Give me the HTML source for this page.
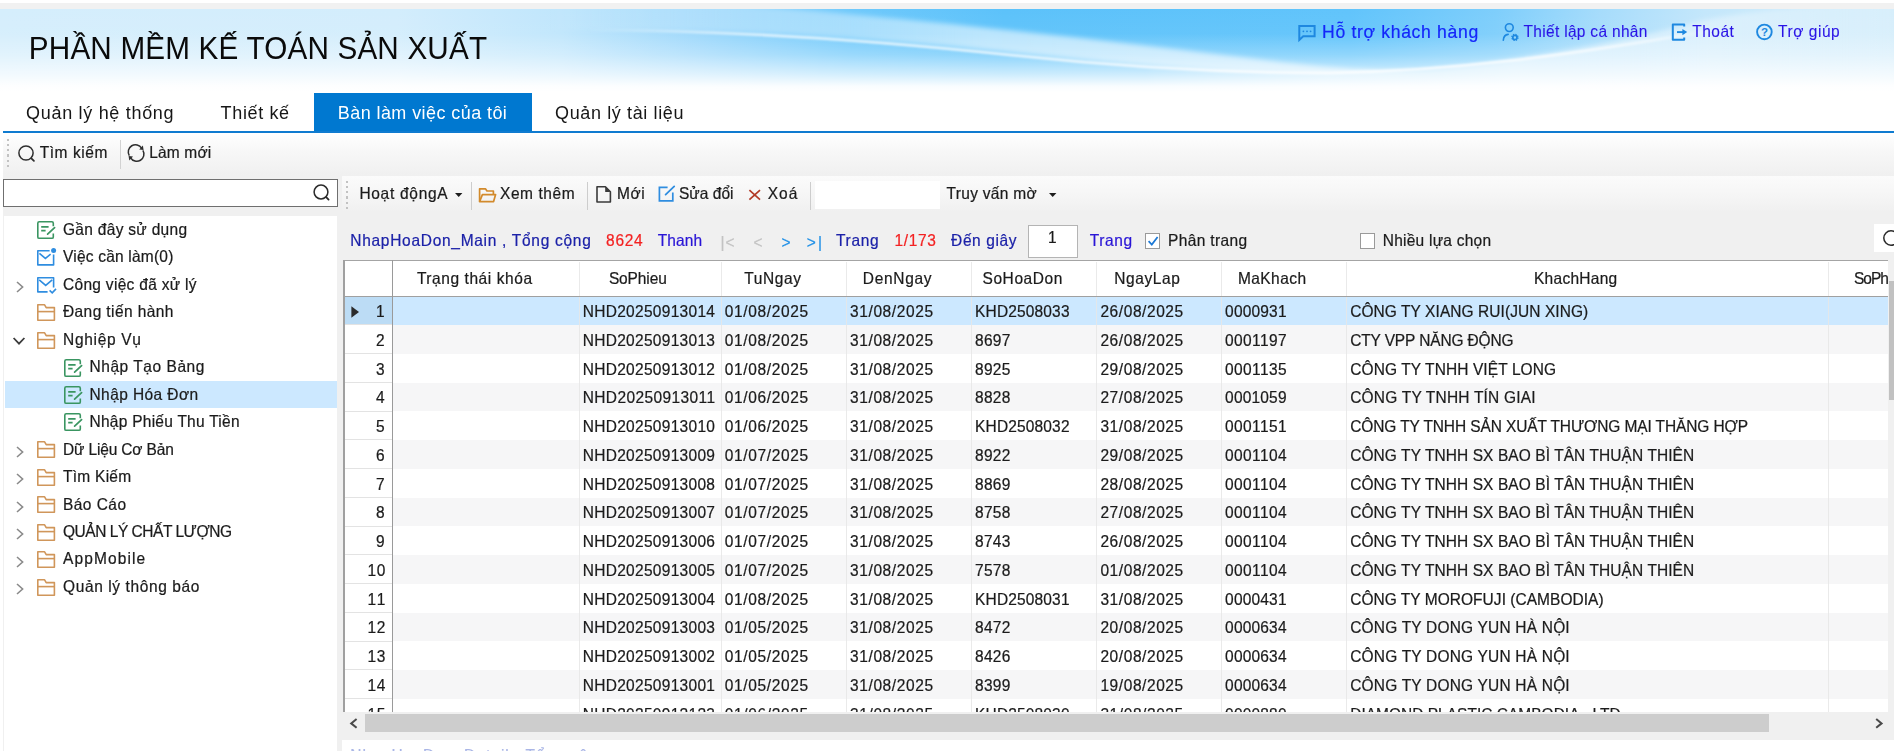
<!DOCTYPE html>
<html><head><meta charset="utf-8"><title>PHẦN MỀM KẾ TOÁN SẢN XUẤT</title>
<style>
html,body{margin:0;padding:0;}
body{width:1894px;height:751px;overflow:hidden;background:#fff;font-family:"Liberation Sans", sans-serif;position:relative;}
.b{position:absolute;box-sizing:border-box;}
.t{position:absolute;white-space:pre;line-height:1;-webkit-text-stroke:0.22px currentColor;transform:scaleY(1.05);transform-origin:0 84.65%;}
svg{overflow:visible;}
</style></head>
<body>
<div class="b" style="left:0.0px;top:0.0px;width:1894.0px;height:3.0px;background:#ffffff"></div>
<div class="b" style="left:0.0px;top:3.0px;width:1894.0px;height:5.5px;background:#f1f1f1"></div>
<svg class="b" style="left:0.0px;top:8.5px" width="1894" height="83" viewBox="0 0 1894 83">
<defs>
<linearGradient id="hg" gradientUnits="userSpaceOnUse" x1="0" x2="1894" y1="0" y2="0">
<stop offset="0" stop-color="#d5eefc"/><stop offset="0.21" stop-color="#d3edfc"/>
<stop offset="0.296" stop-color="#c0e6fc"/><stop offset="0.37" stop-color="#9bd7fb"/>
<stop offset="0.45" stop-color="#6fc9fb"/><stop offset="0.53" stop-color="#5cc2fa"/>
<stop offset="0.713" stop-color="#61c4fb"/><stop offset="0.79" stop-color="#7ecefb"/>
<stop offset="0.845" stop-color="#a6dcfb"/><stop offset="0.90" stop-color="#c4e7fb"/><stop offset="1" stop-color="#d3edfb"/>
</linearGradient>
<linearGradient id="vg" x1="0" x2="0" y1="0" y2="1">
<stop offset="0" stop-color="#fff" stop-opacity="0"/><stop offset="0.30" stop-color="#fff" stop-opacity="0.04"/>
<stop offset="0.55" stop-color="#fff" stop-opacity="0.30"/><stop offset="0.78" stop-color="#fff" stop-opacity="0.68"/>
<stop offset="0.93" stop-color="#fff" stop-opacity="0.96"/><stop offset="1" stop-color="#fff" stop-opacity="1"/>
</linearGradient>
<linearGradient id="rg" gradientUnits="userSpaceOnUse" x1="0" x2="1894" y1="0" y2="0">
<stop offset="0.29" stop-color="#fff" stop-opacity="0"/><stop offset="0.40" stop-color="#fff" stop-opacity="0.26"/>
<stop offset="0.52" stop-color="#fff" stop-opacity="0.56"/><stop offset="0.72" stop-color="#fff" stop-opacity="0.62"/>
</linearGradient>
<linearGradient id="og" gradientUnits="userSpaceOnUse" x1="0" x2="1894" y1="0" y2="0">
<stop offset="0.60" stop-color="#fff" stop-opacity="0"/><stop offset="0.70" stop-color="#fff" stop-opacity="0.45"/>
<stop offset="0.80" stop-color="#fff" stop-opacity="0.62"/><stop offset="0.90" stop-color="#fff" stop-opacity="0.38"/>
<stop offset="1" stop-color="#fff" stop-opacity="0.12"/>
</linearGradient>
<linearGradient id="sg" gradientUnits="userSpaceOnUse" x1="0" x2="1894" y1="0" y2="0">
<stop offset="0.31" stop-color="#fff" stop-opacity="0"/><stop offset="0.40" stop-color="#fff" stop-opacity="0.75"/>
<stop offset="0.80" stop-color="#fff" stop-opacity="0.9"/><stop offset="0.875" stop-color="#fff" stop-opacity="0.55"/>
<stop offset="0.915" stop-color="#fff" stop-opacity="0"/>
</linearGradient>
<filter id="bl2" x="-5%" y="-60%" width="110%" height="220%"><feGaussianBlur stdDeviation="2.4"/></filter>
<filter id="bl1" x="-5%" y="-60%" width="110%" height="220%"><feGaussianBlur stdDeviation="1.0"/></filter>
<clipPath id="bc"><rect x="0" y="0" width="1894" height="83"/></clipPath>
</defs>
<g clip-path="url(#bc)">
<rect x="0" y="0" width="1894" height="83" fill="url(#hg)"/>
<path d="M700,-6 C850,2 1080,28 1280,53 C1340,60 1400,64 1440,62 C1380,66 1320,66 1270,64 C1120,58 980,38 860,30 C770,23 700,21 620,21 L540,21 L540,-6 Z" fill="url(#rg)" filter="url(#bl2)"/>
<path d="M1150,58 C1260,66 1350,66 1430,60 C1530,50 1620,34 1700,12 C1760,0 1820,-4 1894,-6 L1894,90 L1150,90 Z" fill="url(#og)" filter="url(#bl2)"/>
<path d="M560,21 C700,20 860,30 1010,46 C1120,58 1230,64 1330,64 C1450,62 1560,48 1720,20" fill="none" stroke="url(#sg)" stroke-width="2.4" filter="url(#bl1)"/>
<rect x="0" y="0" width="1894" height="83" fill="url(#vg)"/>
</g>
</svg>
<span class="t" style="left:28.8px;top:33.5px;font-size:29.7px;color:#0a0a0a;letter-spacing:0.17px;-webkit-text-stroke:0;transform:scaleY(1.075);">PHẦN MỀM KẾ TOÁN SẢN XUẤT</span>
<span class="t" style="left:1322.1px;top:24.4px;font-size:17.6px;color:#1426fa;letter-spacing:0.66px;-webkit-text-stroke:0.2px;">Hỗ trợ khách hàng</span>
<span class="t" style="left:1523.5px;top:23.8px;font-size:15.5px;color:#2a14e6;letter-spacing:0.31px;-webkit-text-stroke:0.1px;">Thiết lập cá nhân</span>
<span class="t" style="left:1692.2px;top:23.8px;font-size:15.5px;color:#2a14e6;letter-spacing:0.52px;-webkit-text-stroke:0.1px;">Thoát</span>
<span class="t" style="left:1778.0px;top:23.8px;font-size:15.5px;color:#2a14e6;letter-spacing:0.55px;-webkit-text-stroke:0.1px;">Trợ giúp</span>
<svg class="b" style="left:1296.0px;top:22.0px" width="24" height="22" viewBox="0 0 24 22"><path d="M3.3,3.9 H18.6 V14.3 H7.2 L3.3,17.9 Z" fill="none" stroke="#1e88e0" stroke-width="2" stroke-linejoin="miter"/><circle cx="7.4" cy="9.3" r="0.9" fill="#1e88e0"/><circle cx="11" cy="9.3" r="0.9" fill="#1e88e0"/><circle cx="14.6" cy="9.3" r="0.9" fill="#1e88e0"/></svg>
<svg class="b" style="left:1500.0px;top:20.0px" width="24" height="24" viewBox="0 0 24 24"><circle cx="9.3" cy="7.6" r="3.9" fill="none" stroke="#1e88e0" stroke-width="1.6"/><path d="M3.3,20.2 C3.6,16.6 5.6,14.6 8.2,14.4" fill="none" stroke="#1e88e0" stroke-width="1.6" stroke-linecap="round"/><circle cx="14.9" cy="17.4" r="2.1" fill="none" stroke="#1e88e0" stroke-width="1.7"/><circle cx="14.9" cy="17.4" r="3.1" fill="none" stroke="#1e88e0" stroke-width="1.2" stroke-dasharray="1.3 1.15"/></svg>
<svg class="b" style="left:1668.0px;top:20.0px" width="24" height="24" viewBox="0 0 24 24"><path d="M16.2,6.6 V4.5 H4.8 V19.7 H16.2 V17.4" fill="none" stroke="#1e88e0" stroke-width="2" stroke-linejoin="round"/><path d="M9,12.1 H15" stroke="#1e88e0" stroke-width="1.9"/><path d="M14.4,8.9 L19.2,12.1 L14.4,15.3 Z" fill="#1e88e0"/></svg>
<svg class="b" style="left:1752.0px;top:20.0px" width="24" height="24" viewBox="0 0 24 24"><circle cx="12.4" cy="11.9" r="7.3" fill="none" stroke="#1e88e0" stroke-width="1.9"/><text x="12.4" y="16" text-anchor="middle" font-family="Liberation Sans" font-weight="bold" font-size="11.5" fill="#1e88e0">?</text></svg>
<div class="b" style="left:314.4px;top:93.4px;width:217.5px;height:39.0px;background:#0078d0"></div>
<div class="b" style="left:3.0px;top:130.6px;width:1891.0px;height:2.6px;background:#0f7bd0"></div>
<span class="t" style="left:26.1px;top:104.2px;font-size:18px;color:#161616;letter-spacing:0.69px;-webkit-text-stroke:0;">Quản lý hệ thống</span>
<span class="t" style="left:220.6px;top:104.2px;font-size:18px;color:#161616;letter-spacing:0.64px;-webkit-text-stroke:0;">Thiết kế</span>
<span class="t" style="left:337.8px;top:104.2px;font-size:18px;color:#ffffff;letter-spacing:0.42px;-webkit-text-stroke:0;">Bàn làm việc của tôi</span>
<span class="t" style="left:555.1px;top:104.2px;font-size:18px;color:#161616;letter-spacing:0.62px;-webkit-text-stroke:0;">Quản lý tài liệu</span>
<div class="b" style="left:3.0px;top:133.2px;width:1891.0px;height:42.0px;background:linear-gradient(#ffffff 0%,#f7f7f7 45%,#f0f0f0 100%)"></div>
<div class="b" style="left:3.0px;top:175.0px;width:1891.0px;height:576.0px;background:#f0f0f0"></div>
<div class="b" style="left:0.0px;top:91.5px;width:3.0px;height:660.0px;background:#ffffff"></div>
<div class="b" style="left:7.2px;top:139.0px;width:2.2px;height:2.2px;background:#c2c2c2"></div>
<div class="b" style="left:7.2px;top:144.2px;width:2.2px;height:2.2px;background:#c2c2c2"></div>
<div class="b" style="left:7.2px;top:149.3px;width:2.2px;height:2.2px;background:#c2c2c2"></div>
<div class="b" style="left:7.2px;top:154.4px;width:2.2px;height:2.2px;background:#c2c2c2"></div>
<div class="b" style="left:7.2px;top:159.6px;width:2.2px;height:2.2px;background:#c2c2c2"></div>
<div class="b" style="left:7.2px;top:164.8px;width:2.2px;height:2.2px;background:#c2c2c2"></div>
<svg class="b" style="left:14.0px;top:140.6px" width="24" height="24" viewBox="0 0 24 24"><circle cx="12" cy="12" r="7.1" fill="none" stroke="#2e2e2e" stroke-width="1.5"/><path d="M17.32,17.32 l2.6,2.6" stroke="#2e2e2e" stroke-width="1.8" stroke-linecap="round"/></svg>
<span class="t" style="left:39.7px;top:145.2px;font-size:15.5px;color:#1b1b1b;letter-spacing:0.56px;">Tìm kiếm</span>
<div class="b" style="left:119.8px;top:140.0px;width:1.0px;height:28.5px;background:#d2d2d2"></div>
<svg class="b" style="left:123.7px;top:141.0px" width="24" height="24" viewBox="0 0 24 24"><path d="M5.3,14.6 A7.1,7.1 0 0 1 17.6,7.2" fill="none" stroke="#2e2e2e" stroke-width="1.5"/><path d="M18.9,9.4 A7.1,7.1 0 0 1 6.6,16.8" fill="none" stroke="#2e2e2e" stroke-width="1.5"/><path d="M15.2,8.6 L19.6,8.9 L18.9,4.6 Z" fill="#2e2e2e"/><path d="M9,15.4 L4.6,15.1 L5.3,19.4 Z" fill="#2e2e2e"/></svg>
<span class="t" style="left:149.3px;top:145.2px;font-size:15.5px;color:#1b1b1b;letter-spacing:0.15px;">Làm mới</span>
<div class="b" style="left:3.2px;top:178.8px;width:334.6px;height:28.3px;background:#fff;border:1.3px solid #6f6f6f"></div>
<svg class="b" style="left:308.6px;top:180.3px" width="24" height="24" viewBox="0 0 24 24"><circle cx="12" cy="12" r="6.9" fill="none" stroke="#2a2a2a" stroke-width="1.5"/><path d="M17.18,17.18 l2.4,2.4" stroke="#2a2a2a" stroke-width="1.8" stroke-linecap="round"/></svg>
<div class="b" style="left:3.6px;top:215.8px;width:333.0px;height:536.0px;background:#ffffff"></div>
<div class="b" style="left:4.7px;top:381.2px;width:331.9px;height:26.4px;background:#cce8ff"></div>
<svg class="b" style="left:36.2px;top:220.2px" width="22" height="22" viewBox="0 0 22 22"><path d="M17.3,6.2 V3.2 Q17.3,1.8 15.9,1.8 H3.2 Q1.8,1.8 1.8,3.2 V16.9 Q1.8,18.3 3.2,18.3 H15.9 Q17.3,18.3 17.3,16.9 V13.6" fill="none" stroke="#3a9561" stroke-width="1.6"/><path d="M5.2,6.9 H12.6 M5.2,10.6 H9.6" stroke="#3a9561" stroke-width="1.6"/><path d="M11.6,14.2 L18.6,7.6" stroke="#3a9561" stroke-width="1.7" stroke-linecap="round"/></svg>
<span class="t" style="left:63.0px;top:222.0px;font-size:15.5px;color:#1b1b1b;letter-spacing:0.30px;">Gần đây sử dụng</span>
<svg class="b" style="left:36.2px;top:247.2px" width="24" height="22" viewBox="0 0 24 22"><path d="M13.6,3.8 H1.8 V17.9 H17.6 V7.6" fill="none" stroke="#2f8de0" stroke-width="1.6" stroke-linejoin="round"/><path d="M3.4,6.4 L9.4,11.4 L14.6,7.2" fill="none" stroke="#2f8de0" stroke-width="1.6"/><circle cx="17.6" cy="3.6" r="2.5" fill="#2f8de0"/></svg>
<span class="t" style="left:63.0px;top:249.4px;font-size:15.5px;color:#1b1b1b;letter-spacing:0.21px;">Việc cần làm(0)</span>
<svg class="b" style="left:36.2px;top:276.4px" width="24" height="22" viewBox="0 0 24 22"><path d="M11.6,15.9 H1.8 V1.8 H17.6 V11.4" fill="none" stroke="#2f8de0" stroke-width="1.6" stroke-linejoin="round"/><path d="M3.2,3.8 L9.7,9.4 L16.2,3.8" fill="none" stroke="#2f8de0" stroke-width="1.6"/><path d="M13.6,14.4 L16.2,16.8 L20,12.9" fill="none" stroke="#2f8de0" stroke-width="1.6"/></svg>
<svg class="b" style="left:13.6px;top:280.0px" width="12" height="14" viewBox="0 0 12 14"><path d="M3,2 L8.6,7 L3,12" fill="none" stroke="#8a8a8a" stroke-width="1.6"/></svg>
<span class="t" style="left:63.0px;top:276.9px;font-size:15.5px;color:#1b1b1b;letter-spacing:0.30px;">Công việc đã xử lý</span>
<svg class="b" style="left:36.2px;top:303.1px" width="22" height="20" viewBox="0 0 22 20"><path d="M1.8,17.3 V1.8 H8.6 L10.2,4.6 H18.4 V17.3 Z" fill="none" stroke="#d0965a" stroke-width="1.6" stroke-linejoin="round"/><path d="M1.8,8.6 H18.4" stroke="#d0965a" stroke-width="1.6"/></svg>
<span class="t" style="left:63.0px;top:304.3px;font-size:15.5px;color:#1b1b1b;letter-spacing:0.40px;">Đang tiến hành</span>
<svg class="b" style="left:36.2px;top:330.5px" width="22" height="20" viewBox="0 0 22 20"><path d="M1.8,17.3 V1.8 H8.6 L10.2,4.6 H18.4 V17.3 Z" fill="none" stroke="#d0965a" stroke-width="1.6" stroke-linejoin="round"/><path d="M1.8,8.6 H18.4" stroke="#d0965a" stroke-width="1.6"/></svg>
<svg class="b" style="left:12.0px;top:334.9px" width="14" height="12" viewBox="0 0 14 12"><path d="M1.6,3 L7,8.6 L12.4,3" fill="none" stroke="#3c3c3c" stroke-width="1.8"/></svg>
<span class="t" style="left:63.0px;top:331.8px;font-size:15.5px;color:#1b1b1b;letter-spacing:0.70px;">Nghiệp Vụ</span>
<svg class="b" style="left:62.6px;top:357.5px" width="22" height="22" viewBox="0 0 22 22"><path d="M17.3,6.2 V3.2 Q17.3,1.8 15.9,1.8 H3.2 Q1.8,1.8 1.8,3.2 V16.9 Q1.8,18.3 3.2,18.3 H15.9 Q17.3,18.3 17.3,16.9 V13.6" fill="none" stroke="#3a9561" stroke-width="1.6"/><path d="M5.2,6.9 H12.6 M5.2,10.6 H9.6" stroke="#3a9561" stroke-width="1.6"/><path d="M11.6,14.2 L18.6,7.6" stroke="#3a9561" stroke-width="1.7" stroke-linecap="round"/></svg>
<span class="t" style="left:89.5px;top:359.2px;font-size:15.5px;color:#1b1b1b;letter-spacing:0.55px;">Nhập Tạo Bảng</span>
<svg class="b" style="left:62.6px;top:384.9px" width="22" height="22" viewBox="0 0 22 22"><path d="M17.3,6.2 V3.2 Q17.3,1.8 15.9,1.8 H3.2 Q1.8,1.8 1.8,3.2 V16.9 Q1.8,18.3 3.2,18.3 H15.9 Q17.3,18.3 17.3,16.9 V13.6" fill="none" stroke="#3a9561" stroke-width="1.6"/><path d="M5.2,6.9 H12.6 M5.2,10.6 H9.6" stroke="#3a9561" stroke-width="1.6"/><path d="M11.6,14.2 L18.6,7.6" stroke="#3a9561" stroke-width="1.7" stroke-linecap="round"/></svg>
<span class="t" style="left:89.5px;top:386.7px;font-size:15.5px;color:#1b1b1b;letter-spacing:0.41px;">Nhập Hóa Đơn</span>
<svg class="b" style="left:62.6px;top:412.4px" width="22" height="22" viewBox="0 0 22 22"><path d="M17.3,6.2 V3.2 Q17.3,1.8 15.9,1.8 H3.2 Q1.8,1.8 1.8,3.2 V16.9 Q1.8,18.3 3.2,18.3 H15.9 Q17.3,18.3 17.3,16.9 V13.6" fill="none" stroke="#3a9561" stroke-width="1.6"/><path d="M5.2,6.9 H12.6 M5.2,10.6 H9.6" stroke="#3a9561" stroke-width="1.6"/><path d="M11.6,14.2 L18.6,7.6" stroke="#3a9561" stroke-width="1.7" stroke-linecap="round"/></svg>
<span class="t" style="left:89.5px;top:414.1px;font-size:15.5px;color:#1b1b1b;letter-spacing:0.26px;">Nhập Phiếu Thu Tiền</span>
<svg class="b" style="left:36.2px;top:440.3px" width="22" height="20" viewBox="0 0 22 20"><path d="M1.8,17.3 V1.8 H8.6 L10.2,4.6 H18.4 V17.3 Z" fill="none" stroke="#d0965a" stroke-width="1.6" stroke-linejoin="round"/><path d="M1.8,8.6 H18.4" stroke="#d0965a" stroke-width="1.6"/></svg>
<svg class="b" style="left:13.6px;top:444.7px" width="12" height="14" viewBox="0 0 12 14"><path d="M3,2 L8.6,7 L3,12" fill="none" stroke="#8a8a8a" stroke-width="1.6"/></svg>
<span class="t" style="left:63.0px;top:441.6px;font-size:15.5px;color:#1b1b1b;letter-spacing:-0.15px;">Dữ Liệu Cơ Bản</span>
<svg class="b" style="left:36.2px;top:467.8px" width="22" height="20" viewBox="0 0 22 20"><path d="M1.8,17.3 V1.8 H8.6 L10.2,4.6 H18.4 V17.3 Z" fill="none" stroke="#d0965a" stroke-width="1.6" stroke-linejoin="round"/><path d="M1.8,8.6 H18.4" stroke="#d0965a" stroke-width="1.6"/></svg>
<svg class="b" style="left:13.6px;top:472.1px" width="12" height="14" viewBox="0 0 12 14"><path d="M3,2 L8.6,7 L3,12" fill="none" stroke="#8a8a8a" stroke-width="1.6"/></svg>
<span class="t" style="left:63.0px;top:469.0px;font-size:15.5px;color:#1b1b1b;letter-spacing:0.26px;">Tìm Kiếm</span>
<svg class="b" style="left:36.2px;top:495.2px" width="22" height="20" viewBox="0 0 22 20"><path d="M1.8,17.3 V1.8 H8.6 L10.2,4.6 H18.4 V17.3 Z" fill="none" stroke="#d0965a" stroke-width="1.6" stroke-linejoin="round"/><path d="M1.8,8.6 H18.4" stroke="#d0965a" stroke-width="1.6"/></svg>
<svg class="b" style="left:13.6px;top:499.6px" width="12" height="14" viewBox="0 0 12 14"><path d="M3,2 L8.6,7 L3,12" fill="none" stroke="#8a8a8a" stroke-width="1.6"/></svg>
<span class="t" style="left:63.0px;top:496.5px;font-size:15.5px;color:#1b1b1b;letter-spacing:0.45px;">Báo Cáo</span>
<svg class="b" style="left:36.2px;top:522.6px" width="22" height="20" viewBox="0 0 22 20"><path d="M1.8,17.3 V1.8 H8.6 L10.2,4.6 H18.4 V17.3 Z" fill="none" stroke="#d0965a" stroke-width="1.6" stroke-linejoin="round"/><path d="M1.8,8.6 H18.4" stroke="#d0965a" stroke-width="1.6"/></svg>
<svg class="b" style="left:13.6px;top:527.0px" width="12" height="14" viewBox="0 0 12 14"><path d="M3,2 L8.6,7 L3,12" fill="none" stroke="#8a8a8a" stroke-width="1.6"/></svg>
<span class="t" style="left:63.0px;top:523.9px;font-size:15.5px;color:#1b1b1b;letter-spacing:-0.47px;">QUẢN LÝ CHẤT LƯỢNG</span>
<svg class="b" style="left:36.2px;top:550.1px" width="22" height="20" viewBox="0 0 22 20"><path d="M1.8,17.3 V1.8 H8.6 L10.2,4.6 H18.4 V17.3 Z" fill="none" stroke="#d0965a" stroke-width="1.6" stroke-linejoin="round"/><path d="M1.8,8.6 H18.4" stroke="#d0965a" stroke-width="1.6"/></svg>
<svg class="b" style="left:13.6px;top:554.5px" width="12" height="14" viewBox="0 0 12 14"><path d="M3,2 L8.6,7 L3,12" fill="none" stroke="#8a8a8a" stroke-width="1.6"/></svg>
<span class="t" style="left:63.0px;top:551.4px;font-size:15.5px;color:#1b1b1b;letter-spacing:1.12px;">AppMobile</span>
<svg class="b" style="left:36.2px;top:577.5px" width="22" height="20" viewBox="0 0 22 20"><path d="M1.8,17.3 V1.8 H8.6 L10.2,4.6 H18.4 V17.3 Z" fill="none" stroke="#d0965a" stroke-width="1.6" stroke-linejoin="round"/><path d="M1.8,8.6 H18.4" stroke="#d0965a" stroke-width="1.6"/></svg>
<svg class="b" style="left:13.6px;top:581.9px" width="12" height="14" viewBox="0 0 12 14"><path d="M3,2 L8.6,7 L3,12" fill="none" stroke="#8a8a8a" stroke-width="1.6"/></svg>
<span class="t" style="left:63.0px;top:578.8px;font-size:15.5px;color:#1b1b1b;letter-spacing:0.61px;">Quản lý thông báo</span>
<div class="b" style="left:342.3px;top:175.7px;width:1552.0px;height:36.2px;background:linear-gradient(#fbfbfb 0%,#f6f6f6 50%,#f0f0f0 100%)"></div>
<div class="b" style="left:345.8px;top:181.0px;width:2.2px;height:2.2px;background:#c2c2c2"></div>
<div class="b" style="left:345.8px;top:186.2px;width:2.2px;height:2.2px;background:#c2c2c2"></div>
<div class="b" style="left:345.8px;top:191.3px;width:2.2px;height:2.2px;background:#c2c2c2"></div>
<div class="b" style="left:345.8px;top:196.4px;width:2.2px;height:2.2px;background:#c2c2c2"></div>
<div class="b" style="left:345.8px;top:201.6px;width:2.2px;height:2.2px;background:#c2c2c2"></div>
<div class="b" style="left:345.8px;top:206.8px;width:2.2px;height:2.2px;background:#c2c2c2"></div>
<span class="t" style="left:359.4px;top:186.3px;font-size:15.5px;color:#1b1b1b;letter-spacing:0.71px;">Hoạt độngA</span>
<svg class="b" style="left:455.2px;top:193.4px" width="8" height="5" viewBox="0 0 8 5"><path d="M0,0 H7.4 L3.7,4 Z" fill="#1e1e1e"/></svg>
<div class="b" style="left:470.8px;top:181.5px;width:1.0px;height:28.0px;background:#cdcdcd"></div>
<svg class="b" style="left:476.6px;top:185.6px" width="22" height="20" viewBox="0 0 22 20"><path d="M2.6,15.6 V2.8 H8.4 L10,5 H16.4 V8" fill="none" stroke="#d28a2c" stroke-width="1.7" stroke-linejoin="round"/><path d="M5.4,8.6 H18.6 L16.6,15.6 H2.6 Z" fill="none" stroke="#d28a2c" stroke-width="1.7" stroke-linejoin="round"/></svg>
<span class="t" style="left:500.0px;top:186.3px;font-size:15.5px;color:#1b1b1b;letter-spacing:0.57px;">Xem thêm</span>
<div class="b" style="left:586.8px;top:181.5px;width:1.0px;height:28.0px;background:#cdcdcd"></div>
<svg class="b" style="left:593.6px;top:184.4px" width="20" height="22" viewBox="0 0 20 22"><path d="M3,2.8 H11.4 L16.4,7.8 V18 H3 Z" fill="none" stroke="#3a3a3a" stroke-width="1.6" stroke-linejoin="round"/><path d="M11.2,2.8 V8 H16.4 Z" fill="#3a3a3a"/></svg>
<span class="t" style="left:617.1px;top:186.3px;font-size:15.5px;color:#1b1b1b;letter-spacing:0.59px;">Mới</span>
<svg class="b" style="left:656.6px;top:184.4px" width="22" height="22" viewBox="0 0 22 22"><path d="M10.6,3.4 H2.4 V16.8 H15.8 V8.6" fill="none" stroke="#2f8de0" stroke-width="1.7" stroke-linejoin="miter"/><path d="M8.6,10.6 L17.2,2.4" stroke="#2f8de0" stroke-width="1.8" stroke-linecap="round"/></svg>
<span class="t" style="left:678.9px;top:186.3px;font-size:15.5px;color:#1b1b1b;letter-spacing:0.05px;">Sửa đổi</span>
<svg class="b" style="left:747.0px;top:188.0px" width="16" height="14" viewBox="0 0 16 14"><path d="M2.4,2.2 L13,11.6 M13,2.2 L2.4,11.6" stroke="#b23a26" stroke-width="1.7"/></svg>
<span class="t" style="left:767.7px;top:186.3px;font-size:15.5px;color:#1b1b1b;letter-spacing:1.01px;">Xoá</span>
<div class="b" style="left:809.8px;top:181.5px;width:1.0px;height:28.0px;background:#cdcdcd"></div>
<div class="b" style="left:814.7px;top:180.6px;width:125.0px;height:28.4px;background:#ffffff"></div>
<span class="t" style="left:946.6px;top:186.3px;font-size:15.5px;color:#1b1b1b;letter-spacing:0.29px;">Truy vấn mờ</span>
<svg class="b" style="left:1049.4px;top:193.4px" width="8" height="5" viewBox="0 0 8 5"><path d="M0,0 H7.4 L3.7,4 Z" fill="#1e1e1e"/></svg>
<span class="t" style="left:350.3px;top:232.6px;font-size:15.5px;color:#1c22a8;letter-spacing:0.71px;">NhapHoaDon_Main , Tổng cộng</span>
<span class="t" style="left:606.1px;top:232.6px;font-size:15.5px;color:#f32222;letter-spacing:0.67px;">8624</span>
<span class="t" style="left:657.8px;top:232.6px;font-size:15.5px;color:#2a16d6;letter-spacing:0.11px;">Thanh</span>
<span class="t" style="left:720.5px;top:234.6px;font-size:15.5px;color:#c3c3c3;letter-spacing:1.03px;">|&lt;</span>
<span class="t" style="left:753.6px;top:234.6px;font-size:15.5px;color:#c3c3c3;">&lt;</span>
<span class="t" style="left:781.5px;top:234.6px;font-size:15.5px;color:#1f8fe6;">&gt;</span>
<span class="t" style="left:806.8px;top:234.6px;font-size:15.5px;color:#1f8fe6;letter-spacing:2.13px;">&gt;|</span>
<span class="t" style="left:836.0px;top:232.6px;font-size:15.5px;color:#1c22a8;letter-spacing:0.67px;">Trang</span>
<span class="t" style="left:894.5px;top:232.6px;font-size:15.5px;color:#f32222;letter-spacing:0.65px;">1/173</span>
<span class="t" style="left:951.1px;top:232.6px;font-size:15.5px;color:#1c22a8;letter-spacing:0.60px;">Đến giây</span>
<div class="b" style="left:1028.4px;top:225.3px;width:49.6px;height:32.3px;background:#fff;border:1.2px solid #b4b4b4"></div>
<span class="t" style="left:1048.1px;top:229.9px;font-size:15.5px;color:#1b1b1b;">1</span>
<span class="t" style="left:1089.7px;top:232.6px;font-size:15.5px;color:#2a16d6;letter-spacing:0.60px;">Trang</span>
<div class="b" style="left:1144.7px;top:232.8px;width:15.8px;height:15.8px;background:#fff;border:1.2px solid #9a9a9a"></div>
<svg class="b" style="left:1144.7px;top:232.8px" width="16" height="16" viewBox="0 0 16 16"><path d="M3.6,8.2 L6.8,11.6 L12.6,4" fill="none" stroke="#1b78d6" stroke-width="1.7"/></svg>
<span class="t" style="left:1168.1px;top:232.6px;font-size:15.5px;color:#1b1b1b;letter-spacing:0.35px;">Phân trang</span>
<div class="b" style="left:1359.7px;top:232.8px;width:15.8px;height:15.8px;background:#fff;border:1.2px solid #9a9a9a"></div>
<span class="t" style="left:1382.7px;top:232.6px;font-size:15.5px;color:#1b1b1b;letter-spacing:0.25px;">Nhiều lựa chọn</span>
<div class="b" style="left:1874.4px;top:223.6px;width:20.0px;height:28.2px;background:#ffffff"></div>
<svg class="b" style="left:1879.2px;top:226.4px" width="24" height="24" viewBox="0 0 24 24"><circle cx="12" cy="12" r="7.2" fill="none" stroke="#2a2a2a" stroke-width="1.5"/><path d="M17.39,17.39 l2.6,2.6" stroke="#2a2a2a" stroke-width="1.8" stroke-linecap="round"/></svg>
<div class="b" style="left:343.2px;top:260.0px;width:1545.1px;height:452.2px;background:#ffffff"></div>
<div class="b" style="left:393.3px;top:296.9px;width:1495.0px;height:27.9px;background:#cce8ff"></div>
<div class="b" style="left:344.8px;top:296.9px;width:47.2px;height:27.9px;background:#bcdcf5"></div>
<div class="b" style="left:344.8px;top:324.4px;width:47.4px;height:1.0px;background:#e3e3e3"></div>
<div class="b" style="left:393.3px;top:325.1px;width:1495.0px;height:28.8px;background:#f6f6f7"></div>
<div class="b" style="left:344.8px;top:353.2px;width:47.4px;height:1.0px;background:#e3e3e3"></div>
<div class="b" style="left:344.8px;top:381.9px;width:47.4px;height:1.0px;background:#e3e3e3"></div>
<div class="b" style="left:393.3px;top:382.6px;width:1495.0px;height:28.8px;background:#f6f6f7"></div>
<div class="b" style="left:344.8px;top:410.7px;width:47.4px;height:1.0px;background:#e3e3e3"></div>
<div class="b" style="left:344.8px;top:439.4px;width:47.4px;height:1.0px;background:#e3e3e3"></div>
<div class="b" style="left:393.3px;top:440.1px;width:1495.0px;height:28.8px;background:#f6f6f7"></div>
<div class="b" style="left:344.8px;top:468.2px;width:47.4px;height:1.0px;background:#e3e3e3"></div>
<div class="b" style="left:344.8px;top:496.9px;width:47.4px;height:1.0px;background:#e3e3e3"></div>
<div class="b" style="left:393.3px;top:497.6px;width:1495.0px;height:28.8px;background:#f6f6f7"></div>
<div class="b" style="left:344.8px;top:525.7px;width:47.4px;height:1.0px;background:#e3e3e3"></div>
<div class="b" style="left:344.8px;top:554.4px;width:47.4px;height:1.0px;background:#e3e3e3"></div>
<div class="b" style="left:393.3px;top:555.0px;width:1495.0px;height:28.8px;background:#f6f6f7"></div>
<div class="b" style="left:344.8px;top:583.2px;width:47.4px;height:1.0px;background:#e3e3e3"></div>
<div class="b" style="left:344.8px;top:611.9px;width:47.4px;height:1.0px;background:#e3e3e3"></div>
<div class="b" style="left:393.3px;top:612.5px;width:1495.0px;height:28.8px;background:#f6f6f7"></div>
<div class="b" style="left:344.8px;top:640.7px;width:47.4px;height:1.0px;background:#e3e3e3"></div>
<div class="b" style="left:344.8px;top:669.4px;width:47.4px;height:1.0px;background:#e3e3e3"></div>
<div class="b" style="left:393.3px;top:670.0px;width:1495.0px;height:28.8px;background:#f6f6f7"></div>
<div class="b" style="left:344.8px;top:698.2px;width:47.4px;height:1.0px;background:#e3e3e3"></div>
<div class="b" style="left:344.8px;top:726.9px;width:47.4px;height:1.0px;background:#e3e3e3"></div>
<div class="b" style="left:578.5px;top:262.0px;width:1.2px;height:450.2px;background:#e6e6e6;opacity:0.85"></div>
<div class="b" style="left:720.9px;top:262.0px;width:1.2px;height:450.2px;background:#e6e6e6;opacity:0.85"></div>
<div class="b" style="left:845.9px;top:262.0px;width:1.2px;height:450.2px;background:#e6e6e6;opacity:0.85"></div>
<div class="b" style="left:970.9px;top:262.0px;width:1.2px;height:450.2px;background:#e6e6e6;opacity:0.85"></div>
<div class="b" style="left:1095.9px;top:262.0px;width:1.2px;height:450.2px;background:#e6e6e6;opacity:0.85"></div>
<div class="b" style="left:1220.9px;top:262.0px;width:1.2px;height:450.2px;background:#e6e6e6;opacity:0.85"></div>
<div class="b" style="left:1345.9px;top:262.0px;width:1.2px;height:450.2px;background:#e6e6e6;opacity:0.85"></div>
<div class="b" style="left:1828.2px;top:262.0px;width:1.2px;height:450.2px;background:#e6e6e6;opacity:0.85"></div>
<div class="b" style="left:343.2px;top:295.6px;width:1545.1px;height:1.4px;background:#a0a0a0"></div>
<div class="b" style="left:343.2px;top:260.0px;width:1545.1px;height:1.3px;background:#a4a4a4"></div>
<div class="b" style="left:343.2px;top:260.0px;width:1.7px;height:452.2px;background:#a0a0a0"></div>
<div class="b" style="left:391.9px;top:260.0px;width:1.4px;height:452.2px;background:#9a9a9a"></div>
<span class="t" style="left:416.9px;top:270.9px;font-size:15.5px;color:#1b1b1b;letter-spacing:0.57px;">Trạng thái khóa</span>
<span class="t" style="left:608.9px;top:270.9px;font-size:15.5px;color:#1b1b1b;letter-spacing:-0.12px;">SoPhieu</span>
<span class="t" style="left:744.3px;top:270.9px;font-size:15.5px;color:#1b1b1b;letter-spacing:0.60px;">TuNgay</span>
<span class="t" style="left:862.8px;top:270.9px;font-size:15.5px;color:#1b1b1b;letter-spacing:0.70px;">DenNgay</span>
<span class="t" style="left:982.5px;top:270.9px;font-size:15.5px;color:#1b1b1b;letter-spacing:0.58px;">SoHoaDon</span>
<span class="t" style="left:1114.3px;top:270.9px;font-size:15.5px;color:#1b1b1b;letter-spacing:0.59px;">NgayLap</span>
<span class="t" style="left:1237.9px;top:270.9px;font-size:15.5px;color:#1b1b1b;letter-spacing:0.45px;">MaKhach</span>
<span class="t" style="left:1534.0px;top:270.9px;font-size:15.5px;color:#1b1b1b;letter-spacing:0.27px;">KhachHang</span>
<div class="b" style="left:1829px;top:262px;width:59.3px;height:30px;overflow:hidden"><span class="t" style="left:24.9px;top:8.9px;font-size:15.5px;color:#1b1b1b;letter-spacing:-0.95px">SoPhieu</span></div>
<div class="b" style="left:0;top:0;width:1888.3px;height:712.2px;overflow:hidden">
<span class="t" style="left:375.9px;top:304.1px;font-size:15.5px;color:#1b1b1b;">1</span>
<span class="t" style="left:582.7px;top:304.1px;font-size:15.5px;color:#1b1b1b;letter-spacing:0.30px;">NHD20250913014</span>
<span class="t" style="left:724.7px;top:304.1px;font-size:15.5px;color:#1b1b1b;letter-spacing:0.66px;">01/08/2025</span>
<span class="t" style="left:850.0px;top:304.1px;font-size:15.5px;color:#1b1b1b;letter-spacing:0.61px;">31/08/2025</span>
<span class="t" style="left:975.1px;top:304.1px;font-size:15.5px;color:#1b1b1b;letter-spacing:0.15px;">KHD2508033</span>
<span class="t" style="left:1100.4px;top:304.1px;font-size:15.5px;color:#1b1b1b;letter-spacing:0.58px;">26/08/2025</span>
<span class="t" style="left:1225.1px;top:304.1px;font-size:15.5px;color:#1b1b1b;letter-spacing:0.18px;">0000931</span>
<span class="t" style="left:1350.2px;top:304.1px;font-size:15.5px;color:#1b1b1b;letter-spacing:0.07px;">CÔNG TY XIANG RUI(JUN XING)</span>
<span class="t" style="left:375.9px;top:332.8px;font-size:15.5px;color:#1b1b1b;">2</span>
<span class="t" style="left:582.7px;top:332.8px;font-size:15.5px;color:#1b1b1b;letter-spacing:0.30px;">NHD20250913013</span>
<span class="t" style="left:724.7px;top:332.8px;font-size:15.5px;color:#1b1b1b;letter-spacing:0.66px;">01/08/2025</span>
<span class="t" style="left:850.0px;top:332.8px;font-size:15.5px;color:#1b1b1b;letter-spacing:0.61px;">31/08/2025</span>
<span class="t" style="left:975.1px;top:332.8px;font-size:15.5px;color:#1b1b1b;letter-spacing:0.23px;">8697</span>
<span class="t" style="left:1100.4px;top:332.8px;font-size:15.5px;color:#1b1b1b;letter-spacing:0.58px;">26/08/2025</span>
<span class="t" style="left:1225.1px;top:332.8px;font-size:15.5px;color:#1b1b1b;letter-spacing:0.37px;">0001197</span>
<span class="t" style="left:1350.2px;top:332.8px;font-size:15.5px;color:#1b1b1b;letter-spacing:-0.14px;">CTY VPP NĂNG ĐỘNG</span>
<span class="t" style="left:375.9px;top:361.6px;font-size:15.5px;color:#1b1b1b;">3</span>
<span class="t" style="left:582.7px;top:361.6px;font-size:15.5px;color:#1b1b1b;letter-spacing:0.30px;">NHD20250913012</span>
<span class="t" style="left:724.7px;top:361.6px;font-size:15.5px;color:#1b1b1b;letter-spacing:0.66px;">01/08/2025</span>
<span class="t" style="left:850.0px;top:361.6px;font-size:15.5px;color:#1b1b1b;letter-spacing:0.61px;">31/08/2025</span>
<span class="t" style="left:975.1px;top:361.6px;font-size:15.5px;color:#1b1b1b;letter-spacing:0.23px;">8925</span>
<span class="t" style="left:1100.4px;top:361.6px;font-size:15.5px;color:#1b1b1b;letter-spacing:0.58px;">29/08/2025</span>
<span class="t" style="left:1225.1px;top:361.6px;font-size:15.5px;color:#1b1b1b;letter-spacing:0.37px;">0001135</span>
<span class="t" style="left:1350.2px;top:361.6px;font-size:15.5px;color:#1b1b1b;letter-spacing:0.10px;">CÔNG TY TNHH VIỆT LONG</span>
<span class="t" style="left:375.9px;top:390.3px;font-size:15.5px;color:#1b1b1b;">4</span>
<span class="t" style="left:582.7px;top:390.3px;font-size:15.5px;color:#1b1b1b;letter-spacing:0.39px;">NHD20250913011</span>
<span class="t" style="left:724.7px;top:390.3px;font-size:15.5px;color:#1b1b1b;letter-spacing:0.66px;">01/06/2025</span>
<span class="t" style="left:850.0px;top:390.3px;font-size:15.5px;color:#1b1b1b;letter-spacing:0.61px;">31/08/2025</span>
<span class="t" style="left:975.1px;top:390.3px;font-size:15.5px;color:#1b1b1b;letter-spacing:0.23px;">8828</span>
<span class="t" style="left:1100.4px;top:390.3px;font-size:15.5px;color:#1b1b1b;letter-spacing:0.58px;">27/08/2025</span>
<span class="t" style="left:1225.1px;top:390.3px;font-size:15.5px;color:#1b1b1b;letter-spacing:0.18px;">0001059</span>
<span class="t" style="left:1350.2px;top:390.3px;font-size:15.5px;color:#1b1b1b;letter-spacing:0.20px;">CÔNG TY TNHH TÍN GIAI</span>
<span class="t" style="left:375.9px;top:419.1px;font-size:15.5px;color:#1b1b1b;">5</span>
<span class="t" style="left:582.7px;top:419.1px;font-size:15.5px;color:#1b1b1b;letter-spacing:0.30px;">NHD20250913010</span>
<span class="t" style="left:724.7px;top:419.1px;font-size:15.5px;color:#1b1b1b;letter-spacing:0.66px;">01/06/2025</span>
<span class="t" style="left:850.0px;top:419.1px;font-size:15.5px;color:#1b1b1b;letter-spacing:0.61px;">31/08/2025</span>
<span class="t" style="left:975.1px;top:419.1px;font-size:15.5px;color:#1b1b1b;letter-spacing:0.15px;">KHD2508032</span>
<span class="t" style="left:1100.4px;top:419.1px;font-size:15.5px;color:#1b1b1b;letter-spacing:0.58px;">31/08/2025</span>
<span class="t" style="left:1225.1px;top:419.1px;font-size:15.5px;color:#1b1b1b;letter-spacing:0.37px;">0001151</span>
<span class="t" style="left:1350.2px;top:419.1px;font-size:15.5px;color:#1b1b1b;letter-spacing:-0.11px;">CÔNG TY TNHH SẢN XUẤT THƯƠNG MẠI THĂNG HỢP</span>
<span class="t" style="left:375.9px;top:447.8px;font-size:15.5px;color:#1b1b1b;">6</span>
<span class="t" style="left:582.7px;top:447.8px;font-size:15.5px;color:#1b1b1b;letter-spacing:0.30px;">NHD20250913009</span>
<span class="t" style="left:724.7px;top:447.8px;font-size:15.5px;color:#1b1b1b;letter-spacing:0.66px;">01/07/2025</span>
<span class="t" style="left:850.0px;top:447.8px;font-size:15.5px;color:#1b1b1b;letter-spacing:0.61px;">31/08/2025</span>
<span class="t" style="left:975.1px;top:447.8px;font-size:15.5px;color:#1b1b1b;letter-spacing:0.23px;">8922</span>
<span class="t" style="left:1100.4px;top:447.8px;font-size:15.5px;color:#1b1b1b;letter-spacing:0.58px;">29/08/2025</span>
<span class="t" style="left:1225.1px;top:447.8px;font-size:15.5px;color:#1b1b1b;letter-spacing:0.37px;">0001104</span>
<span class="t" style="left:1350.2px;top:447.8px;font-size:15.5px;color:#1b1b1b;letter-spacing:0.08px;">CÔNG TY TNHH SX BAO BÌ TÂN THUẬN THIÊN</span>
<span class="t" style="left:375.9px;top:476.6px;font-size:15.5px;color:#1b1b1b;">7</span>
<span class="t" style="left:582.7px;top:476.6px;font-size:15.5px;color:#1b1b1b;letter-spacing:0.30px;">NHD20250913008</span>
<span class="t" style="left:724.7px;top:476.6px;font-size:15.5px;color:#1b1b1b;letter-spacing:0.66px;">01/07/2025</span>
<span class="t" style="left:850.0px;top:476.6px;font-size:15.5px;color:#1b1b1b;letter-spacing:0.61px;">31/08/2025</span>
<span class="t" style="left:975.1px;top:476.6px;font-size:15.5px;color:#1b1b1b;letter-spacing:0.23px;">8869</span>
<span class="t" style="left:1100.4px;top:476.6px;font-size:15.5px;color:#1b1b1b;letter-spacing:0.58px;">28/08/2025</span>
<span class="t" style="left:1225.1px;top:476.6px;font-size:15.5px;color:#1b1b1b;letter-spacing:0.37px;">0001104</span>
<span class="t" style="left:1350.2px;top:476.6px;font-size:15.5px;color:#1b1b1b;letter-spacing:0.08px;">CÔNG TY TNHH SX BAO BÌ TÂN THUẬN THIÊN</span>
<span class="t" style="left:375.9px;top:505.3px;font-size:15.5px;color:#1b1b1b;">8</span>
<span class="t" style="left:582.7px;top:505.3px;font-size:15.5px;color:#1b1b1b;letter-spacing:0.30px;">NHD20250913007</span>
<span class="t" style="left:724.7px;top:505.3px;font-size:15.5px;color:#1b1b1b;letter-spacing:0.66px;">01/07/2025</span>
<span class="t" style="left:850.0px;top:505.3px;font-size:15.5px;color:#1b1b1b;letter-spacing:0.61px;">31/08/2025</span>
<span class="t" style="left:975.1px;top:505.3px;font-size:15.5px;color:#1b1b1b;letter-spacing:0.23px;">8758</span>
<span class="t" style="left:1100.4px;top:505.3px;font-size:15.5px;color:#1b1b1b;letter-spacing:0.58px;">27/08/2025</span>
<span class="t" style="left:1225.1px;top:505.3px;font-size:15.5px;color:#1b1b1b;letter-spacing:0.37px;">0001104</span>
<span class="t" style="left:1350.2px;top:505.3px;font-size:15.5px;color:#1b1b1b;letter-spacing:0.08px;">CÔNG TY TNHH SX BAO BÌ TÂN THUẬN THIÊN</span>
<span class="t" style="left:375.9px;top:534.1px;font-size:15.5px;color:#1b1b1b;">9</span>
<span class="t" style="left:582.7px;top:534.1px;font-size:15.5px;color:#1b1b1b;letter-spacing:0.30px;">NHD20250913006</span>
<span class="t" style="left:724.7px;top:534.1px;font-size:15.5px;color:#1b1b1b;letter-spacing:0.66px;">01/07/2025</span>
<span class="t" style="left:850.0px;top:534.1px;font-size:15.5px;color:#1b1b1b;letter-spacing:0.61px;">31/08/2025</span>
<span class="t" style="left:975.1px;top:534.1px;font-size:15.5px;color:#1b1b1b;letter-spacing:0.23px;">8743</span>
<span class="t" style="left:1100.4px;top:534.1px;font-size:15.5px;color:#1b1b1b;letter-spacing:0.58px;">26/08/2025</span>
<span class="t" style="left:1225.1px;top:534.1px;font-size:15.5px;color:#1b1b1b;letter-spacing:0.37px;">0001104</span>
<span class="t" style="left:1350.2px;top:534.1px;font-size:15.5px;color:#1b1b1b;letter-spacing:0.08px;">CÔNG TY TNHH SX BAO BÌ TÂN THUẬN THIÊN</span>
<span class="t" style="left:367.4px;top:562.8px;font-size:15.5px;color:#1b1b1b;letter-spacing:0.79px;">10</span>
<span class="t" style="left:582.7px;top:562.8px;font-size:15.5px;color:#1b1b1b;letter-spacing:0.30px;">NHD20250913005</span>
<span class="t" style="left:724.7px;top:562.8px;font-size:15.5px;color:#1b1b1b;letter-spacing:0.66px;">01/07/2025</span>
<span class="t" style="left:850.0px;top:562.8px;font-size:15.5px;color:#1b1b1b;letter-spacing:0.61px;">31/08/2025</span>
<span class="t" style="left:975.1px;top:562.8px;font-size:15.5px;color:#1b1b1b;letter-spacing:0.23px;">7578</span>
<span class="t" style="left:1100.4px;top:562.8px;font-size:15.5px;color:#1b1b1b;letter-spacing:0.58px;">01/08/2025</span>
<span class="t" style="left:1225.1px;top:562.8px;font-size:15.5px;color:#1b1b1b;letter-spacing:0.37px;">0001104</span>
<span class="t" style="left:1350.2px;top:562.8px;font-size:15.5px;color:#1b1b1b;letter-spacing:0.08px;">CÔNG TY TNHH SX BAO BÌ TÂN THUẬN THIÊN</span>
<span class="t" style="left:367.4px;top:591.6px;font-size:15.5px;color:#1b1b1b;letter-spacing:1.95px;">11</span>
<span class="t" style="left:582.7px;top:591.6px;font-size:15.5px;color:#1b1b1b;letter-spacing:0.30px;">NHD20250913004</span>
<span class="t" style="left:724.7px;top:591.6px;font-size:15.5px;color:#1b1b1b;letter-spacing:0.66px;">01/08/2025</span>
<span class="t" style="left:850.0px;top:591.6px;font-size:15.5px;color:#1b1b1b;letter-spacing:0.61px;">31/08/2025</span>
<span class="t" style="left:975.1px;top:591.6px;font-size:15.5px;color:#1b1b1b;letter-spacing:0.15px;">KHD2508031</span>
<span class="t" style="left:1100.4px;top:591.6px;font-size:15.5px;color:#1b1b1b;letter-spacing:0.58px;">31/08/2025</span>
<span class="t" style="left:1225.1px;top:591.6px;font-size:15.5px;color:#1b1b1b;letter-spacing:0.18px;">0000431</span>
<span class="t" style="left:1350.2px;top:591.6px;font-size:15.5px;color:#1b1b1b;letter-spacing:0.03px;">CÔNG TY MOROFUJI (CAMBODIA)</span>
<span class="t" style="left:367.4px;top:620.3px;font-size:15.5px;color:#1b1b1b;letter-spacing:0.79px;">12</span>
<span class="t" style="left:582.7px;top:620.3px;font-size:15.5px;color:#1b1b1b;letter-spacing:0.30px;">NHD20250913003</span>
<span class="t" style="left:724.7px;top:620.3px;font-size:15.5px;color:#1b1b1b;letter-spacing:0.66px;">01/05/2025</span>
<span class="t" style="left:850.0px;top:620.3px;font-size:15.5px;color:#1b1b1b;letter-spacing:0.61px;">31/08/2025</span>
<span class="t" style="left:975.1px;top:620.3px;font-size:15.5px;color:#1b1b1b;letter-spacing:0.23px;">8472</span>
<span class="t" style="left:1100.4px;top:620.3px;font-size:15.5px;color:#1b1b1b;letter-spacing:0.58px;">20/08/2025</span>
<span class="t" style="left:1225.1px;top:620.3px;font-size:15.5px;color:#1b1b1b;letter-spacing:0.18px;">0000634</span>
<span class="t" style="left:1350.2px;top:620.3px;font-size:15.5px;color:#1b1b1b;letter-spacing:0.19px;">CÔNG TY DONG YUN HÀ NỘI</span>
<span class="t" style="left:367.4px;top:649.1px;font-size:15.5px;color:#1b1b1b;letter-spacing:0.79px;">13</span>
<span class="t" style="left:582.7px;top:649.1px;font-size:15.5px;color:#1b1b1b;letter-spacing:0.30px;">NHD20250913002</span>
<span class="t" style="left:724.7px;top:649.1px;font-size:15.5px;color:#1b1b1b;letter-spacing:0.66px;">01/05/2025</span>
<span class="t" style="left:850.0px;top:649.1px;font-size:15.5px;color:#1b1b1b;letter-spacing:0.61px;">31/08/2025</span>
<span class="t" style="left:975.1px;top:649.1px;font-size:15.5px;color:#1b1b1b;letter-spacing:0.23px;">8426</span>
<span class="t" style="left:1100.4px;top:649.1px;font-size:15.5px;color:#1b1b1b;letter-spacing:0.58px;">20/08/2025</span>
<span class="t" style="left:1225.1px;top:649.1px;font-size:15.5px;color:#1b1b1b;letter-spacing:0.18px;">0000634</span>
<span class="t" style="left:1350.2px;top:649.1px;font-size:15.5px;color:#1b1b1b;letter-spacing:0.19px;">CÔNG TY DONG YUN HÀ NỘI</span>
<span class="t" style="left:367.4px;top:677.8px;font-size:15.5px;color:#1b1b1b;letter-spacing:0.79px;">14</span>
<span class="t" style="left:582.7px;top:677.8px;font-size:15.5px;color:#1b1b1b;letter-spacing:0.30px;">NHD20250913001</span>
<span class="t" style="left:724.7px;top:677.8px;font-size:15.5px;color:#1b1b1b;letter-spacing:0.66px;">01/05/2025</span>
<span class="t" style="left:850.0px;top:677.8px;font-size:15.5px;color:#1b1b1b;letter-spacing:0.61px;">31/08/2025</span>
<span class="t" style="left:975.1px;top:677.8px;font-size:15.5px;color:#1b1b1b;letter-spacing:0.23px;">8399</span>
<span class="t" style="left:1100.4px;top:677.8px;font-size:15.5px;color:#1b1b1b;letter-spacing:0.58px;">19/08/2025</span>
<span class="t" style="left:1225.1px;top:677.8px;font-size:15.5px;color:#1b1b1b;letter-spacing:0.18px;">0000634</span>
<span class="t" style="left:1350.2px;top:677.8px;font-size:15.5px;color:#1b1b1b;letter-spacing:0.19px;">CÔNG TY DONG YUN HÀ NỘI</span>
<span class="t" style="left:367.4px;top:706.6px;font-size:15.5px;color:#1b1b1b;letter-spacing:0.79px;">15</span>
<span class="t" style="left:582.7px;top:706.6px;font-size:15.5px;color:#1b1b1b;letter-spacing:0.30px;">NHD20250912123</span>
<span class="t" style="left:724.7px;top:706.6px;font-size:15.5px;color:#1b1b1b;letter-spacing:0.66px;">01/06/2025</span>
<span class="t" style="left:850.0px;top:706.6px;font-size:15.5px;color:#1b1b1b;letter-spacing:0.61px;">31/08/2025</span>
<span class="t" style="left:975.1px;top:706.6px;font-size:15.5px;color:#1b1b1b;letter-spacing:0.15px;">KHD2508030</span>
<span class="t" style="left:1100.4px;top:706.6px;font-size:15.5px;color:#1b1b1b;letter-spacing:0.58px;">31/08/2025</span>
<span class="t" style="left:1225.1px;top:706.6px;font-size:15.5px;color:#1b1b1b;letter-spacing:0.18px;">0000880</span>
<span class="t" style="left:1350.2px;top:706.6px;font-size:15.5px;color:#1b1b1b;letter-spacing:0.01px;">DIAMOND PLASTIC CAMBODIA., LTD</span>
</div>
<svg class="b" style="left:351.4px;top:306.2px" width="9" height="13" viewBox="0 0 9 13"><path d="M0.4,0.2 L8,6 L0.4,11.8 Z" fill="#2b2b2b"/></svg>
<div class="b" style="left:1888.3px;top:260.0px;width:6.0px;height:453.0px;background:#f0f0f0"></div>
<div class="b" style="left:1888.9px;top:281.0px;width:5.2px;height:119.0px;background:#c1c1c1"></div>
<div class="b" style="left:342.8px;top:712.2px;width:1545.5px;height:22.6px;background:#f0f0f0"></div>
<div class="b" style="left:364.7px;top:713.6px;width:1404.6px;height:18.6px;background:#cdcdcd"></div>
<svg class="b" style="left:348.6px;top:717.6px" width="10" height="11" viewBox="0 0 10 11"><path d="M7.6,1 L2.2,5.4 L7.6,9.8" fill="none" stroke="#4a4a4a" stroke-width="2"/></svg>
<svg class="b" style="left:1873.6px;top:717.6px" width="10" height="11" viewBox="0 0 10 11"><path d="M2.2,1 L7.6,5.4 L2.2,9.8" fill="none" stroke="#4a4a4a" stroke-width="2"/></svg>
<div class="b" style="left:341.9px;top:739.9px;width:1553.0px;height:12.0px;background:#ffffff"></div>
<span class="t" style="left:350.3px;top:748.2px;font-size:15.5px;color:#aab6e6;letter-spacing:1.02px;">NhapHoaDon_Detail , Tổng cộng</span>
</body></html>
